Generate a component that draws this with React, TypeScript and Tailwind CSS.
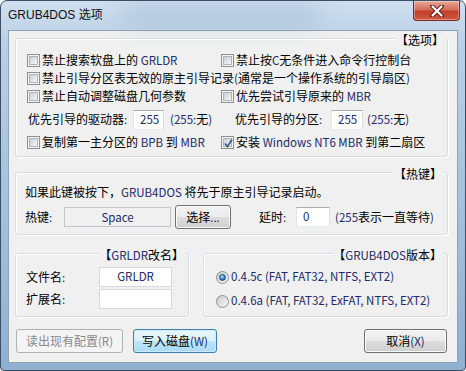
import React from "react";

const font = "font-['Noto_Sans_CJK_SC','Liberation_Sans',sans-serif]";

// latin runs render navy and narrow in the original
const L = ({ children }: { children: React.ReactNode }) => (
  <span className="text-[11.5px] text-[#202a68]">{children}</span>
);

const Check = ({ checked }: { checked?: boolean }) => (
  <span className="relative flex h-[13px] w-[13px] shrink-0 items-center justify-center border border-[#8e8f8f] bg-[#f4f4f4]">
    <span className="h-[9px] w-[9px] border border-[#aeb3b9] bg-[linear-gradient(135deg,#cbcfd5,#f6f6f6)]" />
    {checked && (
      <svg className="absolute left-[1px] top-[1px]" width="11" height="11" viewBox="0 0 11 11">
        <path d="M2 5.5 L4.5 8.5 L9 1.5" fill="none" stroke="#3f5b94" strokeWidth="1.8" />
      </svg>
    )}
  </span>
);

const Radio = ({ checked }: { checked?: boolean }) => (
  <span className="flex h-[13px] w-[13px] shrink-0 items-center justify-center rounded-full border border-[#8e8f8f] bg-[linear-gradient(135deg,#c7cbd1,#f8f8f8)]">
    {checked && (
      <span className="h-[7px] w-[7px] rounded-full border border-[#1d4f85] bg-[radial-gradient(circle_at_40%_35%,#b7e3fb,#2f77c2_60%,#17528f)]" />
    )}
  </span>
);

const Group = ({
  legend,
  legendPos,
  className,
  children,
}: {
  legend: React.ReactNode;
  legendPos: string;
  className?: string;
  children: React.ReactNode;
}) => (
  <div
    className={`relative rounded-[3px] border border-[#d5dfe5] shadow-[inset_1px_1px_0_#fff,1px_1px_0_#fff] ${className}`}
  >
    <span className={`absolute top-[-7px] bg-[#f0f0f0] leading-[16px] ${legendPos}`}>{legend}</span>
    {children}
  </div>
);

const btnBase = "flex h-[24px] items-center justify-center rounded-[3px] border leading-[16px]";
const btnNormal =
  "border-[#707070] bg-[linear-gradient(#f2f2f2_0%,#ebebeb_50%,#dddddd_50%,#cfcfcf_100%)] shadow-[inset_0_0_0_1px_#fbfbfb]";

const Input = ({ value, className }: { value?: string; className?: string }) => (
  <div
    className={`flex h-[20px] items-center border border-[#abadb3] border-b-[#e3e9ef] border-l-[#e2e3ea] border-r-[#dbdfe6] bg-white ${className}`}
  >
    {value && <L>{value}</L>}
  </div>
);

export default function App() {
  return (
    <div
      className={`flex h-[371px] w-[466px] flex-col overflow-hidden whitespace-nowrap rounded-t-[7px] rounded-b-[4px] border border-[#3a4f64] bg-[linear-gradient(180deg,#cfdfef_0%,#b9cfe6_12%,#a3bfdb_60%,#8fb0d0_100%)] text-[12px] text-black ${font}`}
    >
      <div className="relative flex h-[29px] shrink-0">
        <div className="absolute left-[120px] top-[6px] h-[16px] w-[200px] rounded-full bg-[#8ea8c4] opacity-50 blur-md" />
        <span className="relative ml-[7px] mt-[6px] font-['Liberation_Sans','Noto_Sans_CJK_SC',sans-serif] leading-[16px] text-[#111]">
          GRUB4DOS 选项
        </span>
        <div className="relative ml-auto mr-[5px] flex h-[20px] w-[47px] items-center justify-center rounded-b-[4px] border border-t-0 border-[#7a2a22] bg-[linear-gradient(#e9a99b_0%,#d56c58_45%,#c2412c_55%,#d0563e_100%)] shadow-[inset_0_0_0_1px_rgba(255,255,255,0.35)]">
          <svg width="14" height="12" viewBox="0 0 14 12">
            <path d="M2 1 L12 11 M12 1 L2 11" stroke="#5a1e18" strokeWidth="4" strokeLinecap="round" />
            <path d="M2.5 1.5 L11.5 10.5 M11.5 1.5 L2.5 10.5" stroke="#fff" strokeWidth="2.2" strokeLinecap="round" />
          </svg>
        </div>
      </div>

      <div className="flex-1 px-[7px] pb-[7px]">
        <div className="flex h-full flex-col border border-[#8fa3b8] bg-[#f0f0f0] pl-[6px] pr-[9px] pt-[7px]">
          {/* 选项 */}
          <Group legend="【选项】" legendPos="right-[3px]" className="h-[119px] pl-[11px] pt-[12px]">
            <div className="flex h-[18px] items-center">
              <div className="flex w-[194px] items-center gap-[2px]">
                <Check />
                <span>
                  禁止搜索软盘上的 <L>GRLDR</L>
                </span>
              </div>
              <div className="flex items-center gap-[2px]">
                <Check />
                <span>
                  禁止按<L>C</L>无条件进入命令行控制台
                </span>
              </div>
            </div>
            <div className="flex h-[18px] items-center gap-[2px]">
              <Check />
              <span>
                禁止引导分区表无效的原主引导记录<L>(</L>通常是一个操作系统的引导扇区<L>)</L>
              </span>
            </div>
            <div className="flex h-[18px] items-center">
              <div className="flex w-[194px] items-center gap-[2px]">
                <Check />
                <span>禁止自动调整磁盘几何参数</span>
              </div>
              <div className="flex items-center gap-[2px]">
                <Check />
                <span>
                  优先尝试引导原来的 <L>MBR</L>
                </span>
              </div>
            </div>
            <div className="mt-[4px] flex h-[21px] items-center pl-px">
              <div className="flex w-[207px] items-center">
                <span className="w-[105px]">
                  优先引导的驱动器<L>:</L>
                </span>
                <Input className="w-[31px] pl-[6px]" value="255" />
                <span className="ml-[6px]">
                  <L>(255:</L>无<L>)</L>
                </span>
              </div>
              <span className="w-[96px]">
                优先引导的分区<L>:</L>
              </span>
              <Input className="w-[32px] pl-[6px]" value="255" />
              <span className="ml-[4px]">
                <L>(255:</L>无<L>)</L>
              </span>
            </div>
            <div className="flex h-[24px] items-center">
              <div className="flex w-[194px] items-center gap-[2px]">
                <Check />
                <span>
                  复制第一主分区的 <L>BPB</L> 到 <L>MBR</L>
                </span>
              </div>
              <div className="flex items-center gap-[2px]">
                <Check checked />
                <span>
                  安装 <L>Windows NT6 MBR</L> 到第二扇区
                </span>
              </div>
            </div>
          </Group>

          {/* 热键 */}
          <Group legend="【热键】" legendPos="right-[5px]" className="mt-[15px] h-[63px] pl-[9px] pt-[10px]">
            <div className="flex h-[18px] items-center">
              <span>
                如果此键被按下，<L>GRUB4DOS</L> 将先于原主引导记录启动。
              </span>
            </div>
            <div className="mt-[6px] flex h-[20px] items-center">
              <span className="w-[39px]">
                热键<L>:</L>
              </span>
              <div className="flex h-[20px] w-[107px] items-center justify-center border border-[#c3c6cb] bg-[#f0f0f0] leading-[16px]">
                <L>Space</L>
              </div>
              <div className={`${btnBase} ${btnNormal} ml-[4px] h-[20px] w-[56px]`}>
                选择<L>...</L>
              </div>
              <span className="ml-[28px] w-[37px]">
                延时<L>:</L>
              </span>
              <Input className="w-[34px] pl-[6px]" value="0" />
              <span className="ml-[5px]">
                <L>(255</L>表示一直等待<L>)</L>
              </span>
            </div>
          </Group>

          <div className="mt-[18px] flex gap-[14px]">
            {/* GRLDR改名 */}
            <Group
              legend={
                <>
                  【<L>GRLDR</L>改名】
                </>
              }
              legendPos="right-[4px]"
              className="h-[64px] w-[174px] pl-[10px] pt-[13px]"
            >
              <div className="flex h-[20px] items-center">
                <span className="w-[73px]">
                  文件名<L>:</L>
                </span>
                <div className="flex h-[20px] w-[73px] items-center justify-center border border-[#d6dae0] bg-white">
                  <L>GRLDR</L>
                </div>
              </div>
              <div className="mt-[2px] flex h-[20px] items-center">
                <span className="w-[73px]">
                  扩展名<L>:</L>
                </span>
                <div className="h-[20px] w-[73px] border border-[#d6dae0] bg-white" />
              </div>
            </Group>

            {/* GRUB4DOS版本 */}
            <Group
              legend={
                <>
                  【<L>GRUB4DOS</L>版本】
                </>
              }
              legendPos="right-[5px]"
              className="h-[64px] flex-1 pl-[12px] pt-[13px]"
            >
              <div className="flex h-[20px] items-center gap-[2px]">
                <Radio checked />
                <L>0.4.5c (FAT, FAT32, NTFS, EXT2)</L>
              </div>
              <div className="mt-[4px] flex h-[20px] items-center gap-[2px]">
                <Radio />
                <L>0.4.6a (FAT, FAT32, ExFAT, NTFS, EXT2)</L>
              </div>
            </Group>
          </div>

          <div className="mt-[12px] flex">
            <div className={`${btnBase} ml-px w-[107px] border-[#adb2b5] bg-[#f4f4f4] text-[#8a8a8a]`}>
              读出现有配置<span className="text-[11.5px]">(R)</span>
            </div>
            <div
              className={`${btnBase} ml-[10px] w-[84px] border-[#3c7fb1] bg-[linear-gradient(#eaf6fd_0%,#d9f0fc_50%,#bee6fd_50%,#a7d9f5_100%)] shadow-[inset_0_0_0_1px_#cdeafb]`}
            >
              写入磁盘<L>(W)</L>
            </div>
            <div className={`${btnBase} ${btnNormal} ml-auto mr-px w-[83px]`}>
              取消<L>(X)</L>
            </div>
          </div>
        </div>
      </div>
    </div>
  );
}
